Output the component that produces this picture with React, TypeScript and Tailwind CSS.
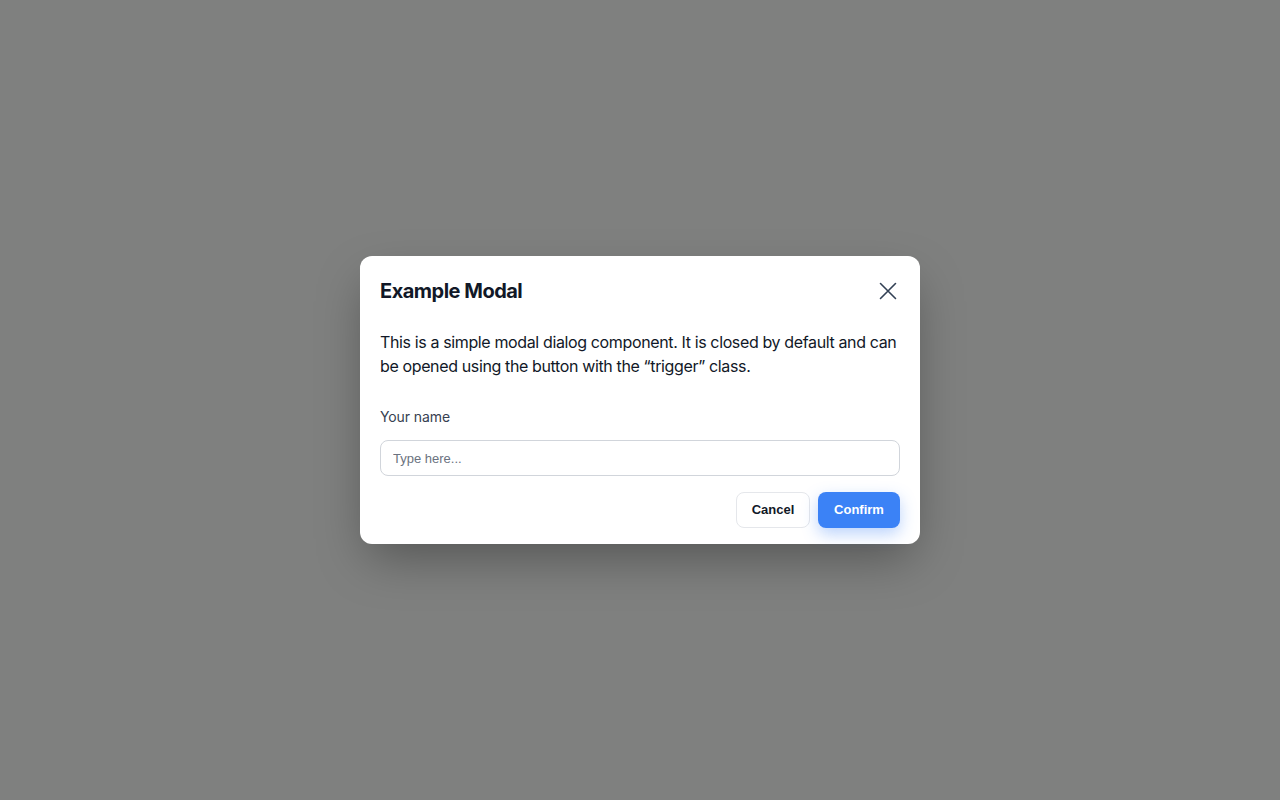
import React from "react";

export default function App() {
  return (
    <div
      className="w-full h-[800px] bg-[#7f807f] flex items-center justify-center"
      style={{ fontFamily: "Inter, 'Noto Sans', sans-serif" }}
    >
      <div className="w-[560px] h-[288px] bg-white rounded-xl px-5 pt-5 pb-4 shadow-[0_20px_50px_-8px_rgba(0,0,0,0.35)]">
        <div className="flex items-center justify-between h-[30px]">
          <h2 className="text-[20px] font-bold text-[#111827] leading-[30px] tracking-[-0.5px]">Example Modal</h2>
          <button className="w-6 h-6 flex items-center justify-center text-[#334155]">
            <svg width="24" height="24" viewBox="0 0 24 24" fill="none" stroke="currentColor" strokeWidth="1.6" strokeLinecap="round">
              <path d="M4.5 4.5L19.5 19.5M19.5 4.5L4.5 19.5" />
            </svg>
          </button>
        </div>
        <p className="mt-6 text-[16px] leading-6 text-[#111827] tracking-[-0.37px]">
          This is a simple modal dialog component. It is closed by default and can be opened using the button with the “trigger” class.
        </p>
        <label className="block mt-[28px] text-[14px] leading-[21px] text-[#374151] tracking-[-0.1px]">Your name</label>
        <input
          className="block mt-[13px] w-full h-9 rounded-lg border border-[#d1d5db] px-3 text-[13px] text-[#111827] placeholder:text-[#6b7280] outline-none"
          style={{ fontFamily: "'Liberation Sans', Arial, sans-serif" }}
          placeholder="Type here..."
        />
        <div className="flex justify-end gap-2 mt-4">
          <button
            className="w-[74px] h-9 rounded-lg border border-[#e5e7eb] bg-white text-[13px] font-bold text-[#111827]"
            style={{ fontFamily: "'Liberation Sans', Arial, sans-serif" }}
          >
            Cancel
          </button>
          <button
            className="w-[82px] h-9 rounded-lg bg-[#3b82f6] text-[13px] font-bold text-white shadow-[0_6px_16px_rgba(59,130,246,0.35)]"
            style={{ fontFamily: "'Liberation Sans', Arial, sans-serif" }}
          >
            Confirm
          </button>
        </div>
      </div>
    </div>
  );
}
